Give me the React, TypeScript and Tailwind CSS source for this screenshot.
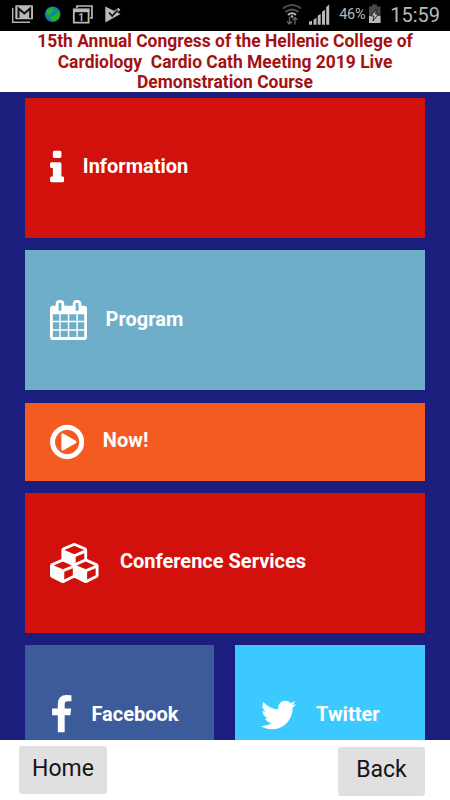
import type { ReactNode } from "react";

type IconProps = { viewBox: string; className: string; d: string };

const Icon = ({ viewBox, className, d }: IconProps) => (
  <svg viewBox={viewBox} className={className} fill="currentColor">
    <path d={d} />
  </svg>
);

const InfoIcon = () => (
  <Icon
    viewBox="576 0 640 1792"
    className="h-10 w-[14.3px] shrink-0"
    d="M1216 1344v128q0 26-19 45t-45 19h-512q-26 0-45-19t-19-45v-128q0-26 19-45t45-19h64v-384h-64q-26 0-45-19t-19-45v-128q0-26 19-45t45-19h384q26 0 45 19t19 45v576h64q26 0 45 19t19 45zm-128-1152v192q0 26-19 45t-45 19h-256q-26 0-45-19t-19-45v-192q0-26 19-45t45-19h256q26 0 45 19t19 45z"
  />
);

const CalendarIcon = () => (
  <Icon
    viewBox="64 0 1664 1792"
    className="h-10 w-[37.1px] shrink-0"
    d="M192 1664h288v-288h-288v288zm352 0h320v-288h-320v288zm-352-352h288v-320h-288v320zm352 0h320v-320h-320v320zm-352-384h288v-288h-288v288zm736 736h320v-288h-320v288zm-384-736h320v-288h-320v288zm768 736h288v-288h-288v288zm-384-352h320v-320h-320v320zm-352-864v-288q0-13-9.5-22.5t-22.5-9.5h-64q-13 0-22.5 9.5t-9.5 22.5v288q0 13 9.5 22.5t22.5 9.5h64q13 0 22.5-9.5t9.5-22.5zm736 864h288v-320h-288v320zm-384-384h320v-288h-320v288zm384 0h288v-288h-288v288zm32-480v-288q0-13-9.5-22.5t-22.5-9.5h-64q-13 0-22.5 9.5t-9.5 22.5v288q0 13 9.5 22.5t22.5 9.5h64q13 0 22.5-9.5t9.5-22.5zm384-64v1280q0 52-38 90t-90 38h-1408q-52 0-90-38t-38-90v-1280q0-52 38-90t90-38h128v-96q0-66 47-113t113-47h64q66 0 113 47t47 113v96h384v-96q0-66 47-113t113-47h64q66 0 113 47t47 113v96h128q52 0 90 38t38 90z"
  />
);

const PlayIcon = () => (
  <Icon
    viewBox="128 0 1536 1792"
    className="h-10 w-[34.3px] shrink-0"
    d="M1312 896q0 37-32 55l-544 320q-15 9-32 9-16 0-32-8-32-19-32-56v-640q0-37 32-56 33-18 64 1l544 320q32 18 32 55zm128 0q0-148-73-273t-198-198-273-73-273 73-198 198-73 273 73 273 198 198 273 73 273-73 198-198 73-273zm224 0q0 209-103 385.5t-279.5 279.5-385.5 103-385.5-103-279.5-279.5-103-385.5 103-385.5 279.5-279.5 385.5-103 385.5 103 279.5 279.5 103 385.5z"
  />
);

const CubesIcon = () => (
  <Icon
    viewBox="0 0 2304 1792"
    className="h-10 w-[51.4px] shrink-0"
    d="M640 1632l384-192v-314l-384 164v342zm-64-454l404-173-404-173-404 173zm1088 454l384-192v-314l-384 164v342zm-64-454l404-173-404-173-404 173zm-448-293l384-165v-266l-384 164v267zm-64-379l441-189-441-189-441 189zm1088 518v416q0 36-19 67t-52 47l-448 224q-25 14-57 14t-57-14l-448-224q-4-2-7-4-2 2-7 4l-448 224q-25 14-57 14t-57-14l-448-224q-33-16-52-47t-19-67v-416q0-38 21.5-70t56.5-48l434-186v-400q0-38 21.5-70t56.5-48l448-192q23-10 50-10t50 10l448 192q35 16 56.5 48t21.5 70v400l434 186q36 16 57 48t21 70z"
  />
);

const FacebookIcon = () => (
  <Icon
    viewBox="384 0 1024 1792"
    className="h-10 w-[22.9px] shrink-0"
    d="M1343 12v264h-157q-86 0-116 36t-30 108v189h293l-39 296h-254v759h-306v-759h-255v-296h255v-218q0-186 104-288.5t277-102.5q147 0 228 12z"
  />
);

const TwitterIcon = () => (
  <Icon
    viewBox="64 0 1664 1792"
    className="h-10 w-[37.1px] shrink-0"
    d="M1684 408q-67 98-162 167 1 14 1 42 0 130-38 259.5t-115.5 248.5-184.5 210.5-258 146-323 54.5q-271 0-496-145 35 4 78 4 225 0 401-138-105-2-188-64.5t-114-159.5q33 5 61 5 43 0 85-11-112-23-185.5-111.5t-73.5-205.5v-4q68 38 146 41-66-44-105-115t-39-154q0-88 44-163 121 149 294.5 238.5t371.5 99.5q-8-38-8-74 0-134 94.5-228.5t228.5-94.5q140 0 236 102 109-21 205-78-37 115-142 178 93-10 186-50z"
  />
);

const StatusBar = () => (
  <div className="flex h-[31px] shrink-0 items-start bg-black text-[#b9b9b9]">
    {/* Notifications */}
    <svg viewBox="0 0 130 31" className="h-[31px] w-[130px]" fill="none">
      <path d="M12.7 8v14.3H30" stroke="#b0b0b0" strokeWidth="1.5" />
      <rect x="15.3" y="5.3" width="17.7" height="14" rx="1" fill="#b9b9b9" />
      <path d="M18.5 18V8.5l5.8 5 5.8-5V18" stroke="#111" strokeWidth="2" />
      <circle cx="52.7" cy="14.3" r="7.8" fill="#1583a6" />
      <path d="M46 11l4-3 4 1-2 4-4 2zM50 17l5-2 3-4 2 2-1 5-4 3-4-1z" fill="#24b51c" />
      <path d="M77 8V6h15v12h-2" stroke="#b9b9b9" strokeWidth="1.7" />
      <path d="M73.8 9.5h14.8v13.2H73.8z" stroke="#b9b9b9" strokeWidth="1.8" />
      <path d="M73 10.5h16.4" stroke="#b9b9b9" strokeWidth="3.4" />
      <text x="81" y="20.5" fontSize="10" fontWeight="700" textAnchor="middle" fill="#b9b9b9">1</text>
      <path d="M105.3 6.5v16L120.5 14z" fill="#b9b9b9" />
      <path d="M112 14l7.5-5" stroke="#b9b9b9" strokeWidth="3" />
      <path d="M109 12.5l3.200 3.500 5.500-6" stroke="#111" strokeWidth="1.700" />
    </svg>
    {/* Signal, battery and clock */}
    <svg viewBox="0 0 52 31" className="ml-auto h-[31px] w-[52px]" fill="none">
      <path d="M4 8.5q9-7 18 0" stroke="#484848" strokeWidth="2" />
      <path d="M6.5 12q6.5-5 13 0" stroke="#555" strokeWidth="2" />
      <path d="M9 15q4-3.5 8 0" stroke="#b9b9b9" strokeWidth="2" />
      <circle cx="13" cy="16.5" r="1.3" fill="#b9b9b9" />
      <path d="M10.5 17v7m-2.5-2.5l2.5 2.5 2.5-2.5M16 24.500v-7m-2.500 2.500l2.500-2.500 2.500 2.500" stroke="#666" strokeWidth="1.3" />
      <path d="M30 24.7v-3l3-1v4zM34.5 24.7v-5l3-2v7zM38.7 24.7v-9l3-2v11zM43 24.700v-13l3-2v15zM47.2 24.7V7l3-2.5v20.2z" fill="#b9b9b9" />
    </svg>
    <span className="mt-[5px] ml-[8px] w-[29px] text-[14.5px] leading-5 tracking-[-0.3px]">46%</span>
    <svg viewBox="0 0 14 20" className="mt-1 h-5 w-[14px]">
      <path d="M1 2.5h3V.5h5v2h3.500V19H1z" fill="#484848" />
      <path d="M1 12h11.5v7H1z" fill="#b9b9b9" />
      <path d="M8.5 5L3 12h3l-1 5 5.500-7H7.500z" fill="#b9b9b9" stroke="#111" strokeWidth=".8" />
    </svg>
    <span className="mt-[3px] mr-[10px] ml-[8px] text-[20px] leading-6">15:59</span>
  </div>
);

type TileProps = { className: string; icon: ReactNode; label: string };

const Tile = ({ className, icon, label }: TileProps) => (
  <div className={`flex items-center gap-[18.5px] pl-[25px] text-white ${className}`}>
    {icon}
    <span className="-mt-[3px] text-[20px] leading-6 font-bold">{label}</span>
  </div>
);

export default function App() {
  return (
    <div className="flex h-[800px] w-[450px] flex-col overflow-hidden bg-white font-['Roboto',sans-serif]">
      <StatusBar />
      <header className="h-[60.5px] shrink-0 overflow-hidden text-center text-[17.45px] leading-[20.5px] font-bold whitespace-pre text-[#a31212]">
        <h1>{"15th Annual Congress of the Hellenic College of\nCardiology  Cardio Cath Meeting 2019 Live\nDemonstration Course"}</h1>
      </header>

      <main className="flex h-[648.5px] shrink-0 flex-col gap-[12.4px] overflow-hidden bg-[#1b1e7c] px-[25px] pt-[6.3px]">
        <Tile className="h-[140px] shrink-0 bg-[#d3110c]" icon={<InfoIcon />} label="Information" />
        <Tile className="h-[140px] shrink-0 bg-[#6eaec9]" icon={<CalendarIcon />} label="Program" />
        <Tile className="h-[78px] shrink-0 bg-[#f35b22]" icon={<PlayIcon />} label="Now!" />
        <Tile className="h-[140px] shrink-0 bg-[#d3110c]" icon={<CubesIcon />} label="Conference Services" />
        <div className="flex shrink-0 justify-between">
          <Tile className="h-[140px] w-[189.4px] bg-[#3c5b9b]" icon={<FacebookIcon />} label="Facebook" />
          <Tile className="h-[140px] w-[189.6px] bg-[#3cc9ff]" icon={<TwitterIcon />} label="Twitter" />
        </div>
      </main>

      <footer className="flex flex-1 items-start justify-between pr-[25px] pl-[19px] text-[23px] text-[#151515]">
        <button className="mt-[6px] h-12 w-[88px] rounded-[3px] bg-[#e0e0e0] pb-[2px]">Home</button>
        <button className="mt-[7px] h-[49px] w-[87px] rounded-[3px] bg-[#e0e0e0] pb-[2px]">Back</button>
      </footer>
    </div>
  );
}
